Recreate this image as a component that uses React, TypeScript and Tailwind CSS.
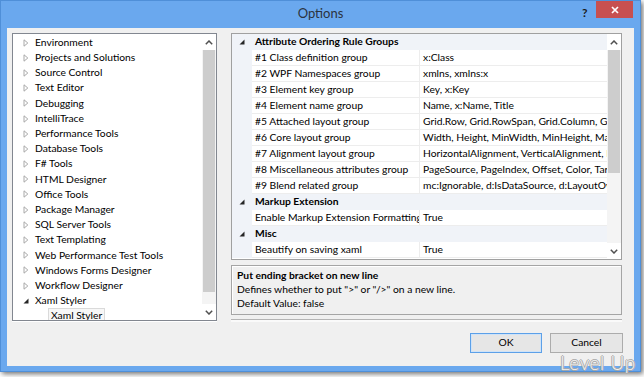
import React from "react";

const treeItems = [
  "Environment",
  "Projects and Solutions",
  "Source Control",
  "Text Editor",
  "Debugging",
  "IntelliTrace",
  "Performance Tools",
  "Database Tools",
  "F# Tools",
  "HTML Designer",
  "Office Tools",
  "Package Manager",
  "SQL Server Tools",
  "Text Templating",
  "Web Performance Test Tools",
  "Windows Forms Designer",
  "Workflow Designer",
];

const groups: { title: string; rows: [string, string][] }[] = [
  {
    title: "Attribute Ordering Rule Groups",
    rows: [
      ["#1 Class definition group", "x:Class"],
      ["#2 WPF Namespaces group", "xmlns, xmlns:x"],
      ["#3 Element key group", "Key, x:Key"],
      ["#4 Element name group", "Name, x:Name, Title"],
      ["#5 Attached layout group", "Grid.Row, Grid.RowSpan, Grid.Column, Grid.ColumnSpan, Canvas.Left, Canvas.Top"],
      ["#6 Core layout group", "Width, Height, MinWidth, MinHeight, MaxWidth, MaxHeight, Margin"],
      ["#7 Alignment layout group", "HorizontalAlignment, VerticalAlignment, HorizontalContentAlignment"],
      ["#8 Miscellaneous attributes group", "PageSource, PageIndex, Offset, Color, TargetName, Property, Value"],
      ["#9 Blend related group", "mc:Ignorable, d:IsDataSource, d:LayoutOverrides, d:IsStaticText"],
    ],
  },
  { title: "Markup Extension", rows: [["Enable Markup Extension Formatting", "True"]] },
  { title: "Misc", rows: [["Beautify on saving xaml", "True"]] },
];

function Collapsed() {
  return (
    <svg width="6" height="8" viewBox="0 0 6 8">
      <polygon points="1,0.8 4.8,4 1,7.2" fill="none" stroke="#a8a8a8" strokeWidth="1" />
    </svg>
  );
}

function Expanded() {
  return (
    <svg width="6" height="6" viewBox="0 0 6 6">
      <polygon points="5.5,0.5 5.5,5.5 0.5,5.5" fill="#262626" />
    </svg>
  );
}

function Chevron({ down }: { down?: boolean }) {
  return (
    <svg width="8" height="5" viewBox="0 0 8 5" className={down ? "rotate-180" : ""}>
      <path d="M0.8 4.2 L4 1 L7.2 4.2" fill="none" stroke="#505050" strokeWidth="1.5" />
    </svg>
  );
}

function ScrollBar({ thumb }: { thumb: number }) {
  return (
    <div className="flex flex-col w-[14px] bg-[#f4f4f4]">
      <div className="h-[16px] flex items-center justify-center bg-white">
        <Chevron />
      </div>
      <div className="mx-[1px] bg-[#cdcdcd]" style={{ height: thumb }} />
      <div className="flex-1" />
      <div className="h-[16px] flex items-center justify-center bg-white">
        <Chevron down />
      </div>
    </div>
  );
}

export default function App() {
  return (
    <div className="relative w-[644px] h-[377px] bg-white overflow-hidden font-[Lato,'Noto_Sans',sans-serif] text-[10.3px] text-black">
      <div className="flex flex-col w-[641px] h-[372px] bg-[#6aa8ee] border border-[#4f8fd8] shadow-[2px_2px_5px_rgba(0,0,0,0.55)]">

        {/* Title bar */}
        <div className="relative h-[27px] flex items-center justify-center pb-[1px]">
          <span className="text-[13px] text-[#2a3340]">Options</span>
          <span className="absolute left-[581px] top-[3px] text-[12px] font-bold text-[#1a1a1a]">?</span>
          <div className="absolute left-[595px] top-0 w-[37px] h-[17px] bg-[#c75050] flex items-center justify-center">
            <svg width="8" height="8" viewBox="0 0 8 8">
              <path d="M1 1 L7 7 M7 1 L1 7" stroke="#fff" strokeWidth="1.7" />
            </svg>
          </div>
        </div>

        {/* Client area */}
        <div className="flex-1 mx-[6px] mb-[5px] bg-[#f0f0f0] flex flex-col pl-[5px] pr-[12px] pt-[5px]">
          <div className="flex">

            {/* Tree */}
            <div className="w-[205px] h-[288px] border border-[#828790] bg-white flex shadow-[0_1px_0_#fff]">
              <div className="flex-1 overflow-hidden pt-[1px]">
                {treeItems.map((t) => (
                  <div key={t} className="h-[15.2px] flex items-center pl-[7px] whitespace-nowrap">
                    <span className="w-[12px] flex justify-center"><Collapsed /></span>
                    <span className="ml-[3px]">{t}</span>
                  </div>
                ))}
                <div className="h-[15.2px] flex items-center pl-[7px]">
                  <span className="w-[12px] flex justify-center"><Expanded /></span>
                  <span className="ml-[3px]">Xaml Styler</span>
                </div>
                <div className="h-[15.2px] flex items-center pl-[35px]">
                  <span className="h-full flex items-center px-[2px] border border-[#dadada] bg-[#f7f7f7]">Xaml Styler</span>
                </div>
              </div>
              <ScrollBar thumb={242} />
            </div>

            {/* Right column */}
            <div className="ml-[14px] w-[391px] flex flex-col">
              <div className="h-[227px] border border-[#a0a0a0] bg-white flex">
                <div className="flex-1 overflow-hidden">
                  {groups.map((g) => (
                    <React.Fragment key={g.title}>
                      <div className="h-[16px] flex items-center bg-[#f0f3f8]">
                        <span className="w-[20px] flex justify-center"><Expanded /></span>
                        <span className="pl-[3px] font-bold whitespace-nowrap">{g.title}</span>
                      </div>
                      {g.rows.map(([name, value]) => (
                        <div key={name} className="h-[16px] flex">
                          <div className="w-[20px] bg-[#f0f3f8]" />
                          <div className="w-[168px] flex items-center pl-[3px] border-r border-b border-[#ededed] overflow-hidden whitespace-nowrap">
                            {name}
                          </div>
                          <div className="flex-1 flex items-center pl-[3px] border-b border-[#ededed] overflow-hidden whitespace-nowrap">
                            {value}
                          </div>
                        </div>
                      ))}
                    </React.Fragment>
                  ))}
                </div>
                <ScrollBar thumb={123} />
              </div>

              {/* Description */}
              <div className="mt-[5px] h-[50px] border border-[#a5a5a5] shadow-[inset_1px_1px_0_#fff] bg-[#f0f0f0] pt-[2px] pl-[5px] leading-[14px]">
                <div className="font-bold">Put ending bracket on new line</div>
                <div>Defines whether to put "&gt;" or "/&gt;" on a new line.</div>
                <div>Default Value: false</div>
              </div>
              <div className="mt-[4px] h-[3px] border-t border-[#b4b4b4] bg-[#fafafa]" />
            </div>
          </div>

          {/* Buttons */}
          <div className="mt-[11px] flex justify-end gap-[8px] mr-[-1px]">
            <button className="w-[72px] h-[20px] border border-[#5ca0e8] bg-[#e6e6e6] shadow-[inset_0_0_0_1px_#cfe3f8] text-[10.3px]">OK</button>
            <button className="w-[73px] h-[20px] border border-[#acacac] bg-[#e6e6e6] text-[10.3px]">Cancel</button>
          </div>
        </div>
      </div>

      {/* Watermark */}
      <div className="absolute left-[560px] top-[349px] text-[19px] font-light tracking-[0.6px] text-[#f2f2f2] [text-shadow:-1px_0_#a8a8a8,1px_0_#a8a8a8,0_-1px_#a8a8a8,0_1px_#a8a8a8]">
        Level Up
      </div>
    </div>
  );
}
